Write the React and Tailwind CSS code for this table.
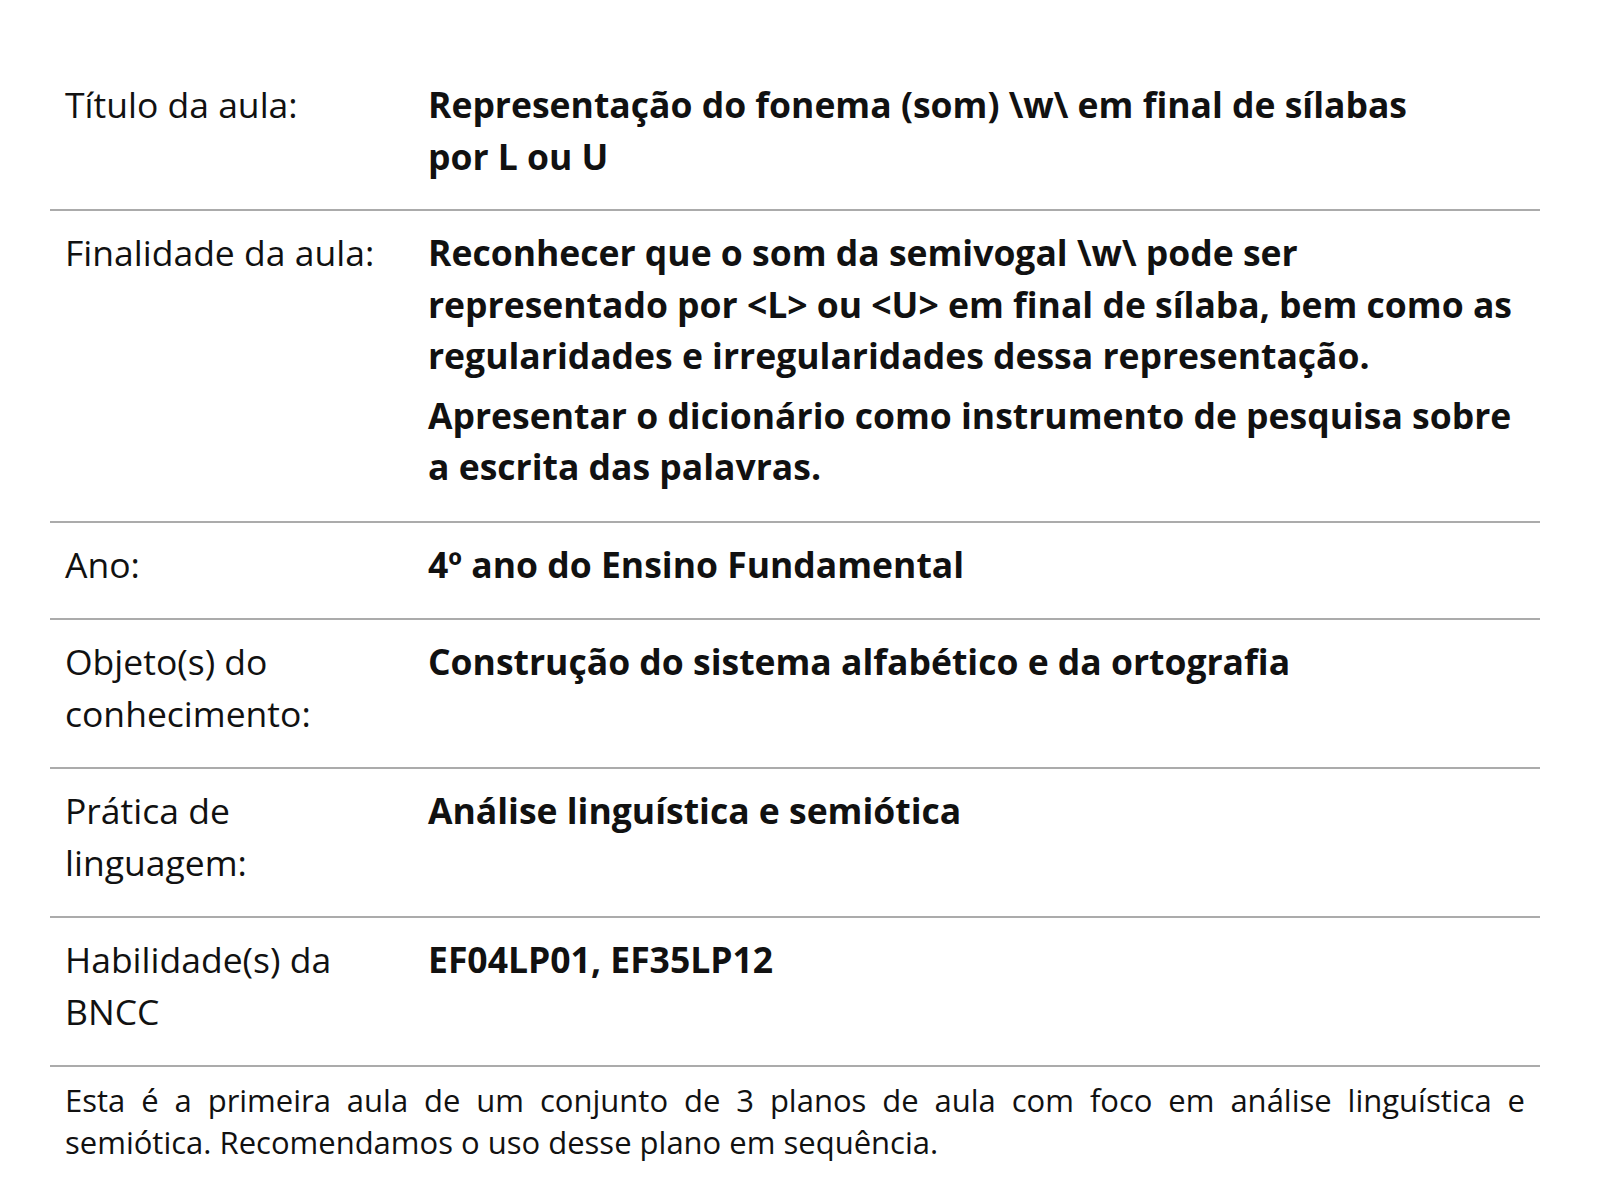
import React from 'react';

const rows = [
  {
    label: 'Título da aula:',
    value: [
      <>
        Representação do fonema (som) \w\ em final de sílabas
        <br />
        por L ou U
      </>,
    ],
  },
  {
    label: 'Finalidade da aula:',
    value: [
      'Reconhecer que o som da semivogal \\w\\ pode ser representado por <L> ou <U> em final de sílaba, bem como as regularidades e irregularidades dessa representação.',
      'Apresentar o dicionário como instrumento de pesquisa sobre a escrita das palavras.',
    ],
  },
  { label: 'Ano:', value: ['4º ano do Ensino Fundamental'] },
  { label: 'Objeto(s) do conhecimento:', value: ['Construção do sistema alfabético e da ortografia'] },
  { label: 'Prática de linguagem:', value: ['Análise linguística e semiótica'] },
  { label: 'Habilidade(s) da BNCC', value: ['EF04LP01, EF35LP12'] },
];

export default function App() {
  return (
    <div
      className="min-h-[1200px] bg-white text-[#111111] pt-[63px]"
      style={{ fontFamily: '"Open Sans", "Noto Sans", sans-serif' }}
    >
      <div className="ml-[50px] w-[1490px]">
        {rows.map((row, idx) => (
          <div
            key={row.label}
            className={
              idx === 0
                ? 'grid grid-cols-[363px_1fr] px-[15px] pt-[16px] pb-[27px] border-b-2 border-[#ababab] text-[35.5px] leading-[51.5px]'
                : 'grid grid-cols-[363px_1fr] px-[15px] pt-[16px] pb-[28px] border-b-2 border-[#ababab] text-[35.5px] leading-[51.5px]'
            }
          >
            <div className="pr-[18px]">{row.label}</div>
            <div className="font-bold flex flex-col gap-[8px]">
              {row.value.map((v, i) => (
                <p key={i}>{v}</p>
              ))}
            </div>
          </div>
        ))}
        <p className="px-[15px] pt-[12px] text-[31px] leading-[42px] text-justify">
          Esta é a primeira aula de um conjunto de 3 planos de aula com foco em análise linguística e semiótica.
          Recomendamos o uso desse plano em sequência.
        </p>
      </div>
    </div>
  );
}
